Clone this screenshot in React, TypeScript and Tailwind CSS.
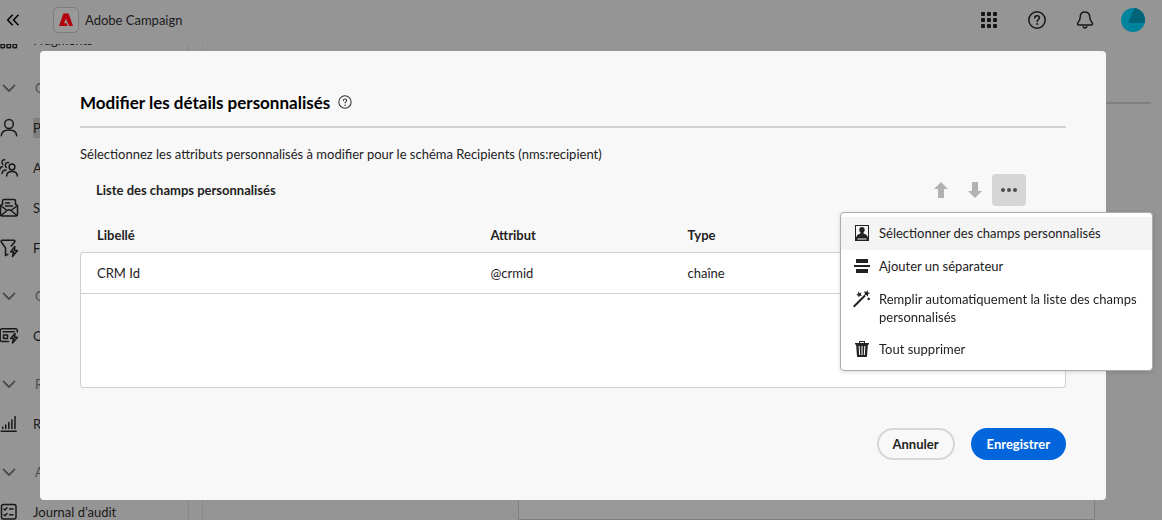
import type { ReactNode } from 'react';

const stroke = {
  fill: 'none',
  stroke: 'currentColor',
  strokeWidth: 1.5,
  strokeLinecap: 'round' as const,
  strokeLinejoin: 'round' as const,
};

function Icon({ size = 20, children }: { size?: number; children: ReactNode }) {
  return (
    <svg width={size} height={size} viewBox={`0 0 ${size} ${size}`} aria-hidden="true" className="shrink-0">
      {children}
    </svg>
  );
}

function FragmentsIcon() {
  return (
    <Icon>
      <g {...stroke}>
        {[2, 8, 14].map((x) => (
          <g key={x}>
            <rect x={x} y="8" width="3.500" height="3.500" rx="0.800" />
            <rect x={x} y="14.300" width="3.500" height="3.500" rx="0.800" />
          </g>
        ))}
      </g>
    </Icon>
  );
}

function ChevronIcon() {
  return (
    <Icon>
      <path {...stroke} strokeWidth={1.8} d="M4.500 7.500 10 13l5.500-5.500" />
    </Icon>
  );
}

function ProfileIcon() {
  return (
    <Icon>
      <g {...stroke}>
        <ellipse cx="10" cy="6" rx="4.300" ry="4.600" />
        <path d="M2.300 17.800c.3-4 3.300-5.800 7.700-5.800s7.400 1.800 7.700 5.800" />
      </g>
    </Icon>
  );
}

function AudienceIcon() {
  return (
    <Icon>
      <g {...stroke}>
        <circle cx="13" cy="9" r="2.900" />
        <path d="M7.600 18c.2-3 2.200-4.500 5.400-4.500s5.200 1.500 5.400 4.500" />
        <path d="M9.500 4.500A2.600 2.600 0 0 0 6.300 7.200c0 1 .4 1.700 1 2.200" />
        <path d="M3 15.500c.3-2.200 1.700-3.400 4-3.500" />
        <path d="M5.700 1.700A2.300 2.300 0 0 0 3 4.200c0 .9.300 1.500.8 2" />
        <path d="M.800 11.500c.2-1.900 1.200-2.800 2.800-3" />
      </g>
    </Icon>
  );
}

function SubscriptionIcon() {
  return (
    <Icon>
      <g {...stroke}>
        <path d="M3.500 6.500V3A1.500 1.500 0 0 1 5 1.500h10A1.500 1.500 0 0 1 16.500 3v3.500" />
        <path d="M1.500 7.500v9a1.500 1.500 0 0 0 1.500 1.500h14a1.500 1.500 0 0 0 1.500-1.500v-9L12 12.500a3.500 3.500 0 0 0-4 0L1.500 7.500 3.500 6M18.500 7.500l-2-1.500M2 17.500l6-5M18 17.500l-6-5" />
        <path d="M6.500 5h4M6.500 8h7" />
      </g>
    </Icon>
  );
}

function FunnelBoltIcon() {
  return (
    <Icon>
      <g {...stroke}>
        <path d="M9 16.200l-2.500 1.500V10L2.200 3.800A1 1 0 0 1 3 2.300h12a1 1 0 0 1 .8 1.500L12.300 8" />
        <path d="M15.800 8.500 11.700 14h3l-1.200 4.500 5-6h-3z" />
      </g>
    </Icon>
  );
}

function OfferIcon() {
  return (
    <Icon>
      <g {...stroke}>
        <path d="M9.500 15.500H3A1.800 1.800 0 0 1 1.200 13.700V4.500A1.800 1.800 0 0 1 3 2.700h13.500a1.800 1.800 0 0 1 1.800 1.800V6M4.200 5.700h11" />
        <rect x="4.500" y="9" width="4" height="3.400" />
        <path d="M16 7.500 11.700 12.500h3L13.500 17l5-5.700h-3z" />
      </g>
    </Icon>
  );
}

function ReportIcon() {
  return (
    <Icon>
      <path {...stroke} d="M2.200 17.200h15M3.700 14.500v-1.500M6.700 14.500v-3.500M9.800 14.500V8.500M12.900 14.500V6M16 14.500V2.500" />
    </Icon>
  );
}

function AuditIcon() {
  return (
    <Icon>
      <g {...stroke}>
        <rect x="2.500" y="2.500" width="14.500" height="14.500" rx="2" />
        <path d="M5 7l1 1 2-2.300M5 12.800l1 1 2-2.300M10.500 7H14M10.500 12.800H14" strokeWidth="1.400" />
      </g>
    </Icon>
  );
}

function NavItem({ icon, label, active }: { icon: ReactNode; label: string; active?: boolean }) {
  return (
    <li>
      <a href="#" className="flex h-10 items-center gap-3.5 whitespace-nowrap text-[#181818]">
        {icon}
        <span className={active ? 'bg-[#7f7f7f]' : ''}>{label}</span>
      </a>
    </li>
  );
}

function NavSection({ label }: { label: string }) {
  return (
    <li className="mt-2">
      <button type="button" className="flex h-10 items-center gap-4 whitespace-nowrap text-[#4d4d4d]">
        <ChevronIcon />
        {label}
      </button>
    </li>
  );
}

function TopBar() {
  return (
    <header className="relative flex h-11 shrink-0 items-center bg-[#959595] pr-[15px] pb-1 pl-1">
      <button type="button" aria-label="Réduire le menu">
        <Icon>
          <path {...stroke} strokeLinecap="butt" strokeLinejoin="miter" d="M8.700 4.700 3.700 10l5 5.300M14.500 4.700 9.500 10l5 5.300" />
        </Icon>
      </button>
      <svg width="26" height="26" viewBox="0 0 26 26" aria-hidden="true" className="ml-[29px]">
        <rect x=".5" y=".5" width="25" height="25" rx="5" fill="#999999" stroke="#7c7c7c" />
        <path d="M10.400 6.400h5.200L20 19h-4L13 11.400l-1.900 4.800h2.400l1 2.800H6z" fill="#b5000e" />
      </svg>
      <span className="ml-1.5 text-[#1c1c1c]">Adobe Campaign</span>
      <div className="ml-auto flex items-center gap-7 text-[#161616]">
        <button type="button" aria-label="Applications">
          <Icon>
            {[2, 8, 14].map((y) => [2, 8, 14].map((x) => <rect key={`${x}-${y}`} x={x} y={y} width="4" height="4" rx="1" fill="currentColor" />))}
          </Icon>
        </button>
        <button type="button" aria-label="Aide">
          <HelpIcon />
        </button>
        <button type="button" aria-label="Notifications">
          <Icon>
            <g {...stroke}>
              <path d="M10 2C6.800 2 5.200 4.200 5.200 7.200c0 3-1 4.200-2.300 5.600-.8.900-.3 2.200.9 2.200h12.400c1.200 0 1.700-1.300.9-2.200-1.300-1.400-2.300-2.600-2.300-5.600C14.800 4.200 13.200 2 10 2z" />
              <path d="M8.200 16.700c.3.900 1 1.300 1.800 1.300s1.500-.4 1.800-1.300" />
            </g>
          </Icon>
        </button>
        <button type="button" aria-label="Compte" className="-ml-1">
          <Icon size={28}>
            <circle cx="14" cy="14" r="12" fill="#00839d" />
            <path d="M9 17 15.500 2.100A12 12 0 0 1 25.600 17z" fill="#006378" />
          </Icon>
        </button>
      </div>
    </header>
  );
}

function HelpIcon() {
  return (
    <Icon>
      <circle {...stroke} cx="10" cy="10" r="8.200" />
      <path {...stroke} d="M7.700 8c0-1.500 1-2.300 2.400-2.300s2.300.8 2.300 2.100c0 1.700-2.200 1.800-2.200 3.700" />
      <circle cx="10.200" cy="14" r="1" fill="currentColor" />
    </Icon>
  );
}

function MenuItem({ icon, label, highlighted }: { icon: ReactNode; label: string; highlighted?: boolean }) {
  return (
    <li role="none">
      <button
        type="button"
        role="menuitem"
        className={`flex min-h-[33px] w-full items-start gap-2 py-[7px] pr-2 pl-3 text-left leading-[18px] text-[#222222] ${highlighted ? 'bg-[#f4f4f4]' : 'bg-white'}`}
      >
        {icon}
        <span>{label}</span>
      </button>
    </li>
  );
}

function FieldsMenu() {
  return (
    <ul
      role="menu"
      className="absolute top-[38px] -right-[127px] z-10 w-[313px] rounded border border-[#acacac] bg-white pt-1 pb-1 shadow-[0_1px_4px_rgba(0,0,0,0.15)]"
    >
      <MenuItem
        highlighted
        label="Sélectionner des champs personnalisés"
        icon={
          <Icon size={18}>
            <path fill="currentColor" fillRule="evenodd" d="M2 1h14v16H2zM3 2v10.500h12V2zM4.500 14.500h9V15.500h-9z" />
            <path fill="currentColor" d="M9 3c1.700 0 2.700 1.100 2.700 2.700 0 1.300-.6 2.200-1.200 2.800v.8c.2.700 3.200.8 3.500 2.700v1H4v-1c.3-1.900 3.300-2 3.500-2.700v-.8C6.900 7.900 6.300 7 6.300 5.700 6.300 4.100 7.300 3 9 3z" />
          </Icon>
        }
      />
      <MenuItem
        label="Ajouter un séparateur"
        icon={
          <Icon size={18}>
            <path fill="currentColor" d="M3.500 2h11a.5.500 0 0 1 .5.500V6H3V2.500a.5.500 0 0 1 .5-.5zM1 8h16v2H1zM3 12h12v3.500a.5.500 0 0 1-.5.500h-11a.5.500 0 0 1-.5-.5z" />
          </Icon>
        }
      />
      <MenuItem
        label="Remplir automatiquement la liste des champs personnalisés"
        icon={
          <Icon size={18}>
            <path fill="none" stroke="currentColor" strokeWidth="2" d="M.700 16.800 12 5.500" />
            <path
              fill="currentColor"
              d="m5 1.500 1.500 1.700 2-.8-.8 2L9 6l-2.200-.2L5.700 7.700 5.200 5.500 3 5l1.900-1.100zM14.500 0l.3 2.300L17 3l-2 1.200v2.300l-1.700-1.500-2.200.5.900-2.100L11 1.500l2.300.2zM15.700 7.300l1.600 1.600-1.600 1.600-1.600-1.600z"
            />
          </Icon>
        }
      />
      <MenuItem
        label="Tout supprimer"
        icon={
          <Icon size={18}>
            <path
              fill="currentColor"
              fillRule="evenodd"
              d="M6 1.500a.5.500 0 0 1 .5-.5h5a.5.500 0 0 1 .5.500V3h4v1.500h-1.100L14 16.500a.6.600 0 0 1-.6.500H4.600a.6.600 0 0 1-.6-.5L3.100 4.500H2V3h4zM7 2v1h4V2zM5.600 6l.6 9h1L6.600 6zM8.500 6v9h1V6zM11.400 6l-.6 9h1l.6-9z"
            />
          </Icon>
        }
      />
    </ul>
  );
}

function FieldsTable() {
  return (
    <table className="w-full table-fixed border-separate border-spacing-0 text-left">
      <thead>
        <tr className="h-[34px] text-[#222222]">
          <th scope="col" className="w-2/5 px-[17px] font-bold">Libellé</th>
          <th scope="col" className="w-1/5 px-4 font-bold">Attribut</th>
          <th scope="col" className="w-2/5 px-4 font-bold">Type</th>
        </tr>
      </thead>
      <tbody className="text-[#222222]">
        <tr className="h-[42px] bg-white">
          <td className="rounded-tl border-t border-b border-l border-[#d0d0d0] px-4">CRM Id</td>
          <td className="border-t border-b border-[#d0d0d0] px-4">@crmid</td>
          <td className="rounded-tr border-t border-r border-b border-[#d0d0d0] px-4">chaîne</td>
        </tr>
        <tr className="h-[94px] bg-white">
          <td colSpan={3} className="rounded-b border-r border-b border-l border-[#d0d0d0]" />
        </tr>
      </tbody>
    </table>
  );
}

function Dialog() {
  return (
    <div className="fixed inset-0 pt-[51px] pr-14 pl-10">
      <section
        role="dialog"
        aria-labelledby="dialog-title"
        className="rounded bg-[#f8f8f8] px-10 pt-10 pb-10 text-[#222222]"
      >
        <div className="flex h-[37px] items-start gap-2 border-b-2 border-[#d3d3d3]">
          <h1 id="dialog-title" className="text-[17px] leading-6 font-bold text-black">
            Modifier les détails personnalisés
          </h1>
          <button type="button" aria-label="Aide" className="mt-1 text-[#333333]">
            <svg width="14" height="14" viewBox="0 0 20 20" aria-hidden="true">
              <circle {...stroke} cx="10" cy="10" r="8.800" />
              <path {...stroke} d="M7.700 8c0-1.500 1-2.300 2.400-2.300s2.300.8 2.300 2.100c0 1.700-2.200 1.800-2.200 3.700" />
              <circle cx="10.200" cy="14.500" r="1.100" fill="currentColor" />
            </svg>
          </button>
        </div>
        <p className="mt-4 leading-5">
          Sélectionnez les attributs personnalisés à modifier pour le schéma Recipients (nms:recipient)
        </p>
        <div className="mt-2.5 flex h-8 items-center justify-between pr-10 pl-4">
          <h2 className="font-bold">Liste des champs personnalisés</h2>
          <div className="flex items-center text-[#b1b1b1]">
            <button type="button" disabled aria-label="Monter" className="px-2">
              <Icon size={18}>
                <path fill="currentColor" d="M9 1 16 8h-4v9H6V8H2z" />
              </Icon>
            </button>
            <button type="button" disabled aria-label="Descendre" className="px-2">
              <Icon size={18}>
                <path fill="currentColor" d="M9 17 2 10h4V1h6v9h4z" />
              </Icon>
            </button>
            <div className="relative">
              <button
                type="button"
                aria-label="Plus d’actions"
                aria-haspopup="menu"
                aria-expanded="true"
                className="flex h-8 w-[34px] items-center justify-center rounded bg-[#d5d5d5] text-[#4b4b4b]"
              >
                <Icon size={18}>
                  <circle cx="3" cy="9" r="2" fill="currentColor" />
                  <circle cx="9" cy="9" r="2" fill="currentColor" />
                  <circle cx="15" cy="9" r="2" fill="currentColor" />
                </Icon>
              </button>
              <FieldsMenu />
            </div>
          </div>
        </div>
        <div className="mt-3">
          <FieldsTable />
        </div>
        <div className="mt-10 flex justify-end gap-4">
          <button type="button" className="h-8 rounded-full border-2 border-[#d5d5d5] px-3.5 font-bold">
            Annuler
          </button>
          <button type="button" className="h-8 rounded-full bg-[#0265dc] px-4 font-bold text-white">
            Enregistrer
          </button>
        </div>
      </section>
    </div>
  );
}

export default function App() {
  return (
    <div className="flex h-screen flex-col overflow-hidden bg-[#959595] font-['Lato','Open_Sans',sans-serif] text-[13px] leading-5">
      <TopBar />
      <div className="flex min-h-0 flex-1 overflow-hidden">
        <nav className="w-[189px] shrink-0 overflow-hidden border-r border-[#8a8a8a]">
          <ul className="-mt-6 -ml-px">
            <NavItem icon={<FragmentsIcon />} label="Fragments" />
            <NavSection label="Gestion des clients" />
            <NavItem icon={<ProfileIcon />} label="Profils" active />
            <NavItem icon={<AudienceIcon />} label="Audiences" />
            <NavItem icon={<SubscriptionIcon />} label="Services" />
            <NavItem icon={<FunnelBoltIcon />} label="Filtres" />
            <NavSection label="Gestion des offres" />
            <NavItem icon={<OfferIcon />} label="Offres" />
            <NavSection label="Rapports" />
            <NavItem icon={<ReportIcon />} label="Rapports" />
            <NavSection label="Administration" />
            <NavItem icon={<AuditIcon />} label="Journal d’audit" />
          </ul>
        </nav>
        <main className="ml-[13px] flex flex-1 flex-col border-l border-[#8a8a8a] pr-[11px]">
          <div className="mt-[58px] border-b-2 border-[#808080]" />
          <div className="mr-14 ml-[315px] flex-1 border-x border-b border-[#7f7f7f] bg-[#999999]" />
        </main>
      </div>
      <Dialog />
    </div>
  );
}
